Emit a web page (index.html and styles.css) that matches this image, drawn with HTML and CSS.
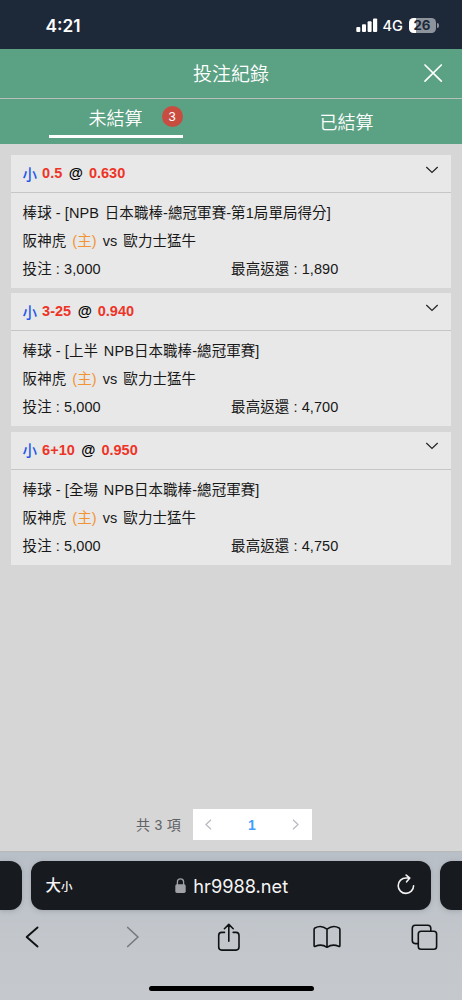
FILE: index.html
```html
<!DOCTYPE html>
<html lang="zh-Hant">
<head>
<meta charset="utf-8">
<meta name="viewport" content="width=device-width, initial-scale=1">
<title>投注紀錄</title>
<link rel="stylesheet" href="styles.css">
</head>
<body>
<div class="phone">
  <div class="status">
    <span class="time">4:21</span>
    <svg class="signal" width="22" height="14" viewBox="0 0 22 14" fill="#fff"><rect x="0.3" y="9" width="4" height="5" rx="1"/><rect x="6" y="6.3" width="4" height="7.7" rx="1"/><rect x="11.6" y="3.3" width="4" height="10.7" rx="1"/><rect x="17" y="0.4" width="4.2" height="13.6" rx="1"/></svg>
    <span class="net">4G</span>
    <span class="battery"><span class="level">26</span></span>
    <span class="cap"></span>
  </div>
  <header class="header">
    <h1 class="title">投注紀錄</h1>
    <svg class="close" width="20" height="20" viewBox="0 0 20 20" fill="none" stroke="#fff" stroke-width="1.7" stroke-linecap="round"><path d="M2 2 18.3 18.2M18.3 2 2 18.2"/></svg>
  </header>
  <nav class="tabs">
    <div class="tab"><div class="tab-active"><span>未結算</span><span class="badge">3</span></div></div>
    <div class="tab tab-idle"><span>已結算</span></div>
  </nav>
  <main class="list">
    <section class="card">
      <div class="card-head"><span class="side">小</span><b class="red">0.5</b><b class="at">@</b><b class="red">0.630</b>
        <svg class="chev" width="14" height="8" viewBox="0 0 14 8"><path d="M1.3 1 7 6.5 12.7 1"/></svg></div>
      <div class="card-body">
        <p>棒球 - [<span class="npb">NPB</span> 日本職棒-總冠軍賽-第1局單局得分]</p>
        <p class="teams"><span>阪神虎</span><span class="home">(主)</span><span>vs</span><span>歐力士猛牛</span></p>
        <p class="sums"><span>投注 : 3,000</span><span>最高返還 : 1,890</span></p>
      </div>
    </section>
    <section class="card">
      <div class="card-head"><span class="side">小</span><b class="red">3-25</b><b class="at">@</b><b class="red">0.940</b>
        <svg class="chev" width="14" height="8" viewBox="0 0 14 8"><path d="M1.3 1 7 6.5 12.7 1"/></svg></div>
      <div class="card-body">
        <p>棒球 - [<span class="part">上半</span> NPB日本職棒-總冠軍賽]</p>
        <p class="teams"><span>阪神虎</span><span class="home">(主)</span><span>vs</span><span>歐力士猛牛</span></p>
        <p class="sums"><span>投注 : 5,000</span><span>最高返還 : 4,700</span></p>
      </div>
    </section>
    <section class="card">
      <div class="card-head"><span class="side">小</span><b class="red">6+10</b><b class="at">@</b><b class="red">0.950</b>
        <svg class="chev" width="14" height="8" viewBox="0 0 14 8"><path d="M1.3 1 7 6.5 12.7 1"/></svg></div>
      <div class="card-body">
        <p>棒球 - [<span class="part">全場</span> NPB日本職棒-總冠軍賽]</p>
        <p class="teams"><span>阪神虎</span><span class="home">(主)</span><span>vs</span><span>歐力士猛牛</span></p>
        <p class="sums"><span>投注 : 5,000</span><span>最高返還 : 4,750</span></p>
      </div>
    </section>
  </main>
  <div class="pagination">
    <span class="total">共 3 項</span>
    <div class="pager">
      <svg width="7" height="11" viewBox="0 0 7 11"><path d="M6 .8 1 5.5 6 10.2"/></svg>
      <span class="page">1</span>
      <svg width="7" height="11" viewBox="0 0 7 11"><path d="M1 .8 6 5.5 1 10.2"/></svg>
    </div>
  </div>
  <footer class="browser">
    <div class="address-row">
      <div class="side-tab side-left"></div>
      <div class="address">
        <span class="size"><span class="big">大</span><span class="small">小</span></span>
        <span class="host"><svg width="11" height="15" viewBox="0 0 11 15"><rect x="0.3" y="6.3" width="10.4" height="8.6" rx="1.6" fill="#a0a2a7"/><path d="M2.4 7V4a3.1 3.1 0 0 1 6.2 0v3" fill="none" stroke="#a0a2a7" stroke-width="1.3"/></svg><span>hr9988.net</span></span>
        <svg class="reload" width="18" height="21" viewBox="0 0 18 21" fill="none" stroke="#f2f2f2" stroke-width="1.6" stroke-linecap="round" stroke-linejoin="round"><path d="M16.6 11.7A7.7 7.7 0 1 1 9 4h3.7M9.2 1.1 12.8 4.1 9.6 7.8"/></svg>
      </div>
      <div class="side-tab side-right"></div>
    </div>
    <div class="tools">
      <svg width="14" height="22" viewBox="0 0 14 22" stroke-width="1.9"><path d="M12.5 1.5 1.7 11 12.5 20.5"/></svg>
      <svg class="dim" width="14" height="22" viewBox="0 0 14 22" stroke-width="1.7"><path d="M1.7 1.5 12 11 1.7 20.5"/></svg>
      <svg width="24" height="29" viewBox="0 0 24 29" stroke-width="1.6"><path d="M7.5 9.4H4.7Q1.7 9.4 1.7 12.4V24.1Q1.7 27.1 4.7 27.1H19Q22 27.1 22 24.1V12.4Q22 9.4 19 9.4H16.2M11.8 18.2V1.5M7.4 5.7 11.8 1.4 16.2 5.7"/></svg>
      <svg width="28" height="24" viewBox="0 0 28 24" stroke-width="1.6"><path d="M14 4.2Q8.2-.5 1.9 3Q1.1 3.5 1.1 4.5V20.5Q1.1 22 2.4 21.3Q8.5 18.5 14 22.3Q19.5 18.5 25.6 21.3Q26.9 22 26.9 20.5V4.5Q26.9 3.5 26.1 3Q19.8-.5 14 4.2ZM14 4.2V22"/></svg>
      <svg width="27" height="27" viewBox="0 0 27 27" stroke-width="1.6"><rect x="7.3" y="7.3" width="18.3" height="18" rx="2.7"/><path d="M7 19.6H4.3Q1.3 19.6 1.3 16.6V4.3Q1.3 1.3 4.3 1.3H16.8Q19.8 1.3 19.8 4.3V7"/></svg>
    </div>
    <div class="home-bar"></div>
  </footer>
</div>
</body>
</html>
```
FILE: styles.css
```css
* { box-sizing: border-box; }
body { margin: 0; font-family: "Liberation Sans", "Noto Sans CJK TC", sans-serif; }
svg { display: block; flex: none; }
.phone { width: 462px; height: 1000px; display: flex; flex-direction: column; overflow: hidden; background: #d6d6d6; white-space: nowrap; }
.status { height: 49px; flex: none; display: flex; align-items: center; padding-left: 45.5px; background: #1d2939; color: #fff; font-family: Inter, sans-serif; }
.time { width: 310px; font-size: 17.3px; font-weight: 600; line-height: 20px; padding-top: 2px; }
.signal { margin-bottom: -1px; }
.net { width: 26px; margin-left: 5px; font-size: 14.5px; font-weight: 500; padding-top: 2px; }
.battery { width: 27px; height: 15px; margin-top: 1px; border-radius: 4.5px; background: linear-gradient(90deg, #fff 7px, #8e949c 7px); display: flex; align-items: center; justify-content: center; }
.level { font-size: 13.3px; font-weight: 700; color: #1d2939; }
.cap { width: 2px; height: 5px; margin: 1px 0 0 1px; border-radius: 0 2px 2px 0; background: #8e949c; }
.header { height: 50px; flex: none; display: grid; grid-template-columns: 1fr auto 1fr; align-items: center; background: #5ba183; border-bottom: 1px solid #b7c0bb; }
.title { grid-column: 2; margin: 2px 0 0; font-size: 19px; font-weight: 350; color: #fff; line-height: 28px; }
.close { justify-self: end; margin: -1px 19px 0 0; }
.tabs { height: 45px; flex: none; display: grid; grid-template-columns: 1fr 1fr; background: #5ba183; color: #fff; font-size: 18px; font-weight: 350; line-height: 26px; }
.tab { display: flex; justify-content: center; align-items: flex-start; }
.tab-idle { padding-top: 11px; }
.tab-active { position: relative; width: 134px; height: 39px; padding-top: 7px; border-bottom: 3px solid #fff; text-align: center; }
.badge { position: absolute; right: 0; top: 6.5px; width: 21px; height: 21px; border-radius: 50%; background: #c94c41; font-size: 13px; line-height: 21px; }
.list { display: flex; flex-direction: column; gap: 5.4px; padding: 11px 11px 0; height: 664.5px; flex: none; font-size: 14.5px; color: #181818; }
.card { height: 133px; flex: none; background: #e8e8e8; }
.card-head { height: 38px; display: flex; align-items: center; padding: 0 12px 1px 11.6px; border-bottom: 1px solid #c6c6c6; }
.side { color: #2457e8; font-weight: 500; margin-right: 5px; }
.red { color: #ee3427; }
.at { margin: 0 6px 0 6.5px; color: #000; }
.chev { margin: -7px 0 0 auto; fill: none; stroke: #222; stroke-width: 1.2; }
.card-body { padding: 6px 11.6px 0; }
.card-body p { margin: 0; height: 28px; line-height: 28px; letter-spacing: 0.07px; }
.npb, .part { margin-right: 1.7px; }
.teams { display: flex; }
.home { color: #f29436; margin: 0 6px; }
.teams span:last-child { margin-left: 6px; }
.sums { display: grid; grid-template-columns: 208.5px 1fr; }
.pagination { height: 32px; flex: none; display: flex; align-items: center; padding-left: 136px; gap: 11px; color: #606266; }
.total { font-size: 14px; width: 46px; padding-bottom: 2px; word-spacing: 0.6px; }
.pager { width: 119px; height: 31px; background: #fff; display: flex; align-items: center; justify-content: space-between; padding: 0 13px 0 12px; }
.pager svg { fill: none; stroke: #b8bbc2; stroke-width: 1.3; }
.page { color: #409eff; font-size: 14px; font-weight: 700; }
.browser { margin-top: 10.5px; height: 149px; flex: none; background: linear-gradient(#b9bfc7, #c3c7cc 60%, #c5c8cd); border-top: 1px solid #b7b9bb; }
.address-row { display: flex; justify-content: space-between; padding-top: 9px; }
.side-tab, .address { height: 49px; background: #171a1e; box-shadow: 0 1px 5px #6b727b60; }
.side-tab { width: 22px; }
.side-left { border-radius: 0 12px 12px 0; }
.side-right { border-radius: 12px 0 0 12px; }
.address { width: 400px; border-radius: 12px; display: grid; grid-template-columns: 1fr auto 1fr; align-items: center; padding: 0 16px 0 14.5px; color: #f5f5f5; }
.size { display: flex; align-items: baseline; font-weight: 500; line-height: 22px; padding-top: 2px; }
.big { font-size: 15.5px; }
.small { font-size: 11.5px; }
.host { display: flex; align-items: center; gap: 7px; margin-left: 3px; font-family: Inter, sans-serif; font-size: 18.2px; }
.reload { justify-self: end; margin-top: -2px; }
.tools { height: 29px; margin-top: 12.5px; display: grid; grid-template-columns: 101px 91px 95.5px 98px 27px; align-items: center; padding-left: 25px; }
.tools svg { fill: none; stroke: #101113; stroke-linecap: round; stroke-linejoin: round; }
.tools .dim { stroke: #777b80; }
.home-bar { width: 165px; height: 5.5px; margin: 34px auto 0; border-radius: 3px; background: #000; }
```
